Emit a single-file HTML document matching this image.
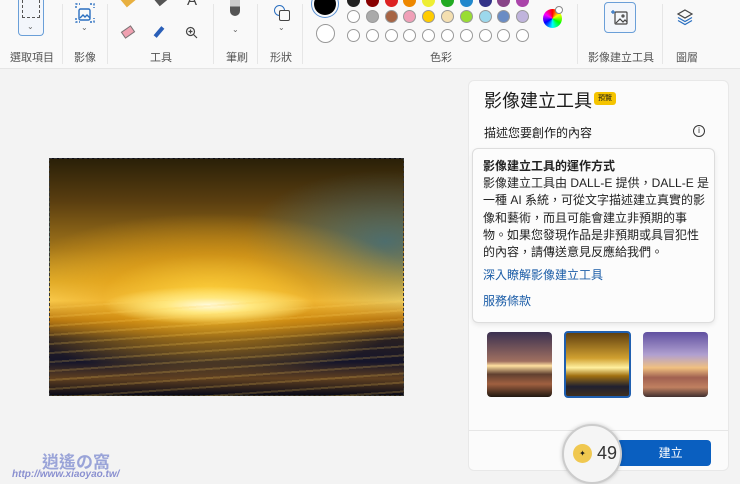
<!DOCTYPE html>
<html><head><meta charset="utf-8"><style>
*{margin:0;padding:0;box-sizing:border-box}
body{width:740px;height:482px;overflow:hidden;background:#f3f3f3;font-family:"Liberation Sans","Noto Sans CJK TC",sans-serif;position:relative;color:#1a1a1a}
.abs{position:absolute}
.tb{left:0;top:0;width:740px;height:69px;background:#f9f9f9;border-bottom:1px solid #e5e5e5}
.lbl{font-size:11px;color:#555;top:49px}
.sep{top:4px;width:1px;height:60px;background:#e6e6e6}
.c{position:absolute;width:13px;height:13px;border-radius:50%;border:1px solid #999}
.sunset{background:
radial-gradient(ellipse 30% 8% at 45% 62%,#fffbe0 0%,#ffe880 40%,rgba(255,200,40,0) 100%),
radial-gradient(ellipse 60% 35% at 45% 58%,rgba(255,210,60,.9) 0%,rgba(230,160,20,.6) 50%,rgba(0,0,0,0) 100%),
radial-gradient(ellipse 40% 30% at 95% 35%,rgba(60,110,130,.8) 0%,rgba(0,0,0,0) 100%),
linear-gradient(180deg,#2a2008 0%,#5a3e10 18%,#a0741a 38%,#e0b030 52%,#ffd860 60%,#b07010 68%,#2a2020 76%,#15152a 86%,#604020 93%,#0a0a18 100%)}
.panel{left:468px;top:80px;width:261px;height:391px;background:#fbfbfb;border:1px solid #e8e8e8;border-radius:6px}
.thumb{top:332px;width:65px;height:65px;border-radius:4px}
</style></head><body>
<div class="abs tb"></div>
<div class="abs" style="left:18px;top:0;width:26px;height:36px;border:1px solid #6a9fd8;border-top:none;border-radius:0 0 4px 4px;background:#f3f6fb"></div>
<div class="abs" style="left:22px;top:0;width:18px;height:18px;border:1.5px dashed #555;border-top:none"></div>
<div class="abs" style="left:27px;top:22px;font-size:8px;color:#666">⌄</div>
<svg class="abs" style="left:74px;top:2px" width="22" height="22" viewBox="0 0 22 22" fill="none" stroke="#2a6fc0" stroke-width="1.4"><path d="M2 6V2h4M16 2h4v4M2 16v4h4M16 20h4v-4" stroke-dasharray="2 1.5"/><rect x="5" y="7" width="11" height="11" rx="1.5"/><path d="M6 16l3-3 2 2 2-2 3 3"/></svg>
<div class="abs" style="left:81px;top:23px;font-size:8px;color:#666">⌄</div>
<div class="abs" style="left:122px;top:-6px;width:14px;height:10px;background:#e8b040;transform:rotate(-40deg)"></div>
<div class="abs" style="left:156px;top:-4px;width:10px;height:8px;background:#555;transform:rotate(-40deg)"></div>
<div class="abs" style="left:187px;top:-8px;font-size:15px;color:#444">A</div>
<div class="abs" style="left:122px;top:28px;width:12px;height:8px;background:#f0a0b0;border:1px solid #777;transform:rotate(-35deg)"></div>
<div class="abs" style="left:157px;top:26px;width:4px;height:12px;background:#2a5fb8;transform:rotate(40deg)"></div>
<svg class="abs" style="left:185px;top:26px" width="13" height="13" viewBox="0 0 13 13" fill="none" stroke="#444" stroke-width="1.2"><circle cx="5.5" cy="5.5" r="4"/><path d="M8.5 8.5l3.5 3.5M5.5 3.5v4M3.5 5.5h4"/></svg>
<div class="abs" style="left:230px;top:0;width:10px;height:16px;background:linear-gradient(#ccc 40%,#555 40%);border-radius:0 0 5px 5px"></div>
<div class="abs" style="left:232px;top:25px;font-size:8px;color:#666">⌄</div>
<div class="abs" style="left:274px;top:5px;width:11px;height:11px;border:1.3px solid #2a6fc0;border-radius:50%"></div>
<div class="abs" style="left:279px;top:10px;width:11px;height:11px;border:1.3px solid #444;background:#f9f9f9;border-radius:2px"></div>
<div class="abs" style="left:278px;top:23px;font-size:8px;color:#666">⌄</div>
<div class="abs sep" style="left:62px"></div><div class="abs sep" style="left:107px"></div><div class="abs sep" style="left:213px"></div><div class="abs sep" style="left:257px"></div><div class="abs sep" style="left:302px"></div><div class="abs sep" style="left:577px"></div><div class="abs sep" style="left:662px"></div>
<div class="abs" style="left:314px;top:-7px;width:22px;height:22px;border-radius:50%;background:#000;box-shadow:0 0 0 2px #f9f9f9,0 0 0 3px #5a8fd0"></div>
<div class="abs" style="left:316px;top:24px;width:19px;height:19px;border-radius:50%;border:1px solid #999;background:#fff"></div>
<div id="cols"></div>
<div class="abs" style="left:543px;top:9px;width:19px;height:19px;border-radius:50%;background:conic-gradient(red,#ff0,lime,cyan,blue,#f0f,red)"></div>
<div class="abs" style="left:555px;top:6px;width:8px;height:8px;border-radius:50%;background:#fff;border:1px solid #888"></div>
<div class="abs" style="left:604px;top:2px;width:32px;height:31px;border:1px solid #6a9fd8;border-radius:4px;background:#f3f6fb"></div>
<svg class="abs" style="left:610px;top:8px" width="20" height="20" viewBox="0 0 20 20" fill="none" stroke="#444" stroke-width="1.2"><rect x="5" y="4" width="12" height="12" rx="1"/><path d="M6 15l4-4 3 3 2-2 2 2"/><circle cx="13" cy="8" r="1"/><path d="M3 2v4M1 4h4" stroke="#2a6fc0"/></svg>
<svg class="abs" style="left:676px;top:8px" width="18" height="18" viewBox="0 0 18 18" fill="none" stroke="#444" stroke-width="1.2"><path d="M9 2l7 4-7 4-7-4z"/><path d="M2 9.5l7 4 7-4" stroke="#2a6fc0"/><path d="M2 12.5l7 4 7-4" stroke="#2a6fc0"/></svg>
<div class="abs lbl" style="left:10px">選取項目</div>
<div class="abs lbl" style="left:74px">影像</div>
<div class="abs lbl" style="left:150px">工具</div>
<div class="abs lbl" style="left:226px">筆刷</div>
<div class="abs lbl" style="left:270px">形狀</div>
<div class="abs lbl" style="left:430px">色彩</div>
<div class="abs lbl" style="left:588px">影像建立工具</div>
<div class="abs lbl" style="left:676px">圖層</div>
<div class="abs sunset" style="left:49px;top:158px;width:355px;height:238px;border:1px dashed #333"></div>
<div class="abs" style="left:49px;top:300px;width:355px;height:96px;background:repeating-linear-gradient(176deg,rgba(255,200,80,0) 0 7px,rgba(255,210,90,.2) 7px 9px)"></div>
<div class="abs panel"></div>
<div class="abs" style="left:484px;top:87px;font-size:18px">影像建立工具</div>
<div class="abs" style="left:594px;top:92px;width:22px;height:13px;background:#f5c400;border-radius:3px;font-size:7px;text-align:center;line-height:13px">預覽</div>
<div class="abs" style="left:484px;top:124px;font-size:12px">描述您要創作的內容</div>
<div class="abs" style="left:693px;top:125px;width:12px;height:12px;border:1px solid #333;border-radius:50%;font-size:8px;text-align:center;line-height:10px">i</div>
<div class="abs" style="left:472px;top:148px;width:243px;height:175px;background:#fcfcfc;border:1px solid #ddd;border-radius:6px;box-shadow:0 2px 5px rgba(0,0,0,.08)"></div>
<div class="abs" style="left:483px;top:158px;width:240px;font-size:12px;line-height:17.2px;color:#222;white-space:nowrap"><b style="font-weight:600">影像建立工具的運作方式</b><br>影像建立工具由 DALL-E 提供，DALL-E 是<br>一種 AI 系統，可從文字描述建立真實的影<br>像和藝術，而且可能會建立非預期的事<br>物。如果您發現作品是非預期或具冒犯性<br>的內容，請傳送意見反應給我們。</div>
<div class="abs" style="left:483px;top:266px;font-size:12px;color:#1d5ea8">深入瞭解影像建立工具</div>
<div class="abs" style="left:483px;top:292px;font-size:12px;color:#1d5ea8">服務條款</div>
<div class="abs thumb" style="left:487px;background:linear-gradient(180deg,#3a3050 0%,#a07060 45%,#ffe0a0 52%,#604030 65%,#a06040 80%,#201810 100%)"></div>
<div class="abs thumb" style="left:564px;top:331px;width:67px;height:67px;border:2px solid #1f5fb0;background:linear-gradient(180deg,#604010 0%,#d0a030 40%,#fff0a0 55%,#a07010 68%,#202030 85%,#403020 100%)"></div>
<div class="abs thumb" style="left:643px;background:linear-gradient(180deg,#6050a0 0%,#b0a0d0 35%,#f0c080 55%,#a06050 70%,#c08060 85%,#403030 100%)"></div>
<div class="abs" style="left:469px;top:430px;width:259px;height:1px;background:#e6e6e6"></div>
<div class="abs" style="left:617px;top:440px;width:94px;height:26px;background:#0a5fc0;border-radius:4px;color:#fff;font-size:12px;text-align:center;line-height:26px"> &nbsp; &nbsp; 建立</div>
<div class="abs" style="left:562px;top:424px;width:60px;height:60px;border-radius:50%;background:#f5f5f5;border:2px solid #ccc;box-shadow:0 0 4px rgba(0,0,0,.2)"></div>
<div class="abs" style="left:573px;top:444px;width:19px;height:19px;border-radius:50%;background:#f0c850;font-size:8px;text-align:center;line-height:19px">✦</div>
<div class="abs" style="left:597px;top:443px;font-size:18px;color:#333">49</div>
<div class="abs" style="left:42px;top:448px;font-size:17px;color:#9aa4d8;font-weight:bold">逍遙の窩</div>
<div class="abs" style="left:12px;top:469px;font-size:10px;color:#8a90d0;font-style:italic;font-weight:bold">http://www.xiaoyao.tw/</div>
<script>
var r1=['#222','#800','#d22','#e80','#ee3','#2a2','#28c','#338','#848','#a4a'],r2=['#fff','#aaa','#a66444','#f0a0b8','#fc0','#f4dfb0','#9d3','#9cd8ec','#6a8cc4','#c0b4dc'];
var h='';for(var i=0;i<10;i++){var x=347+i*18.8;h+='<div class="c" style="left:'+x+'px;top:-6px;background:'+r1[i]+';border-color:'+r1[i]+'"></div>';h+='<div class="c" style="left:'+x+'px;top:10px;background:'+r2[i]+'"></div>';h+='<div class="c" style="left:'+x+'px;top:29px;background:#fff"></div>';}
document.getElementById('cols').innerHTML=h;
</script>
</body></html>
